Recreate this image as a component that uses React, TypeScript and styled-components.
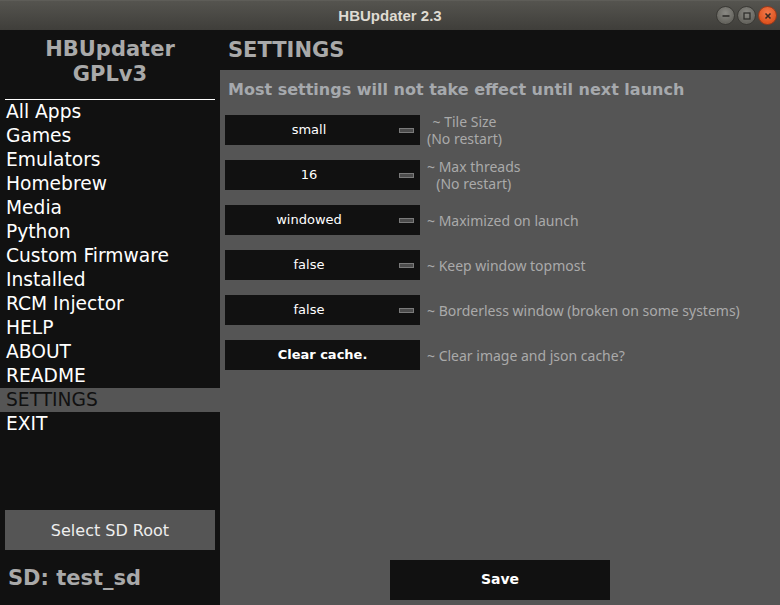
import React from "react";
import styled, { createGlobalStyle } from "styled-components";

const GlobalStyle = createGlobalStyle`
  html, body {
    margin: 0;
    padding: 0;
    background: #111111;
  }
  * {
    box-sizing: border-box;
  }
`;

const NAV_ITEMS = [
  "All Apps",
  "Games",
  "Emulators",
  "Homebrew",
  "Media",
  "Python",
  "Custom Firmware",
  "Installed",
  "RCM Injector",
  "HELP",
  "ABOUT",
  "README",
  "SETTINGS",
  "EXIT",
];

// labels keep their line breaks, like the Tk labels they come from
const SETTINGS: { value: string; label: string }[] = [
  { value: "small", label: "~ Tile Size\n(No restart)" },
  { value: "16", label: "~ Max threads\n(No restart)" },
  { value: "windowed", label: "~ Maximized on launch" },
  { value: "false", label: "~ Keep window topmost" },
  { value: "false", label: "~ Borderless window (broken on some systems)" },
];

export default function App() {
  return (
    <>
      <GlobalStyle />
      <Window>
        <TitleBar>
          <Title>{"HBUpdater 2.3"}</Title>
          <WindowButtons>
            <WinButton>
              <svg width="10" height="10" viewBox="0 0 10 10">
                <line x1="1.5" y1="5" x2="8.5" y2="5" stroke="#2f2e2b" strokeWidth="1.6" />
              </svg>
            </WinButton>
            <WinButton>
              <svg width="10" height="10" viewBox="0 0 10 10">
                <rect x="2" y="2" width="6" height="6" fill="none" stroke="#2f2e2b" strokeWidth="1.3" />
              </svg>
            </WinButton>
            <WinButton close>
              <svg width="10" height="10" viewBox="0 0 10 10">
                <path d="M2.5 2.5 L7.5 7.5 M7.5 2.5 L2.5 7.5" stroke="#3a2a22" strokeWidth="1.6" />
              </svg>
            </WinButton>
          </WindowButtons>
        </TitleBar>
        <Body>
          <Sidebar>
            <Brand>{"HBUpdater\nGPLv3"}</Brand>
            <Divider />
            <NavList>
              {NAV_ITEMS.map((item) => (
                <NavItem key={item} active={item === "SETTINGS"}>
                  {item}
                </NavItem>
              ))}
            </NavList>
            <SidebarFooter>
              <SelectRoot>{"Select SD Root"}</SelectRoot>
              <SdLabel>{"SD: test_sd"}</SdLabel>
            </SidebarFooter>
          </Sidebar>
          <Main>
            <PageHeader>{"SETTINGS"}</PageHeader>
            <Content>
              <Notice>{"Most settings will not take effect until next launch"}</Notice>
              <SettingsList>
                {SETTINGS.map((s, i) => (
                  <Row key={i}>
                    <Dropdown>
                      <DropdownValue>{s.value}</DropdownValue>
                      <Indicator />
                    </Dropdown>
                    <RowLabel>{s.label}</RowLabel>
                  </Row>
                ))}
                <Row>
                  <ActionButton>{"Clear cache."}</ActionButton>
                  <RowLabel>{"~ Clear image and json cache?"}</RowLabel>
                </Row>
              </SettingsList>
              <SaveButton>{"Save"}</SaveButton>
            </Content>
          </Main>
        </Body>
      </Window>
    </>
  );
}

const Window = styled.div`
  width: 780px;
  height: 605px;
  display: flex;
  flex-direction: column;
  overflow: hidden;
  font-family: "DejaVu Sans", sans-serif;
`;

const TitleBar = styled.div`
  height: 30px;
  flex-shrink: 0;
  position: relative;
  display: flex;
  align-items: center;
  justify-content: center;
  background: linear-gradient(#55544f, #3f3e3a);
  border-top: 1px solid #5e5d58;
`;

const Title = styled.div`
  font-family: "Liberation Sans", sans-serif;
  font-weight: 700;
  font-size: 15px;
  color: #dfdbd2;
`;

const WindowButtons = styled.div`
  position: absolute;
  right: 3px;
  top: 5px;
  display: flex;
  gap: 2px;
`;

const WinButton = styled.div<{ close?: boolean }>`
  width: 19px;
  height: 19px;
  border-radius: 50%;
  display: flex;
  align-items: center;
  justify-content: center;
  border: 1px solid ${(p) => (p.close ? "#9c3a1b" : "#3a3935")};
  background: ${(p) =>
    p.close
      ? "radial-gradient(circle at 50% 35%, #f27a4c, #df5420 70%)"
      : "radial-gradient(circle at 50% 35%, #8a8984, #66655f 70%)"};
`;

const Body = styled.div`
  flex: 1;
  display: flex;
  min-height: 0;
`;

const Sidebar = styled.div`
  width: 220px;
  flex-shrink: 0;
  background: #111111;
  display: flex;
  flex-direction: column;
`;

const Brand = styled.div`
  padding-top: 7px;
  font-size: 21px;
  font-weight: 700;
  line-height: 25px;
  white-space: pre-line;
  text-align: center;
  color: #a9a9a9;
`;

const Divider = styled.div`
  height: 1px;
  margin: 12px 5px 0;
  background: #ffffff;
`;

const NavList = styled.div`
  display: flex;
  flex-direction: column;
`;

const NavItem = styled.div<{ active?: boolean }>`
  height: 24px;
  line-height: 24px;
  padding-left: 6px;
  font-size: 18.67px;
  white-space: nowrap;
  color: ${(p) => (p.active ? "#111111" : "#ffffff")};
  background: ${(p) => (p.active ? "#555555" : "transparent")};
`;

const SidebarFooter = styled.div`
  margin-top: auto;
  padding: 0 5px 14px;
  display: flex;
  flex-direction: column;
`;

const SelectRoot = styled.div`
  height: 40px;
  display: flex;
  align-items: center;
  justify-content: center;
  background: #555555;
  color: #eeeeee;
  font-size: 16px;
`;

const SdLabel = styled.div`
  margin-top: 16px;
  padding-left: 3px;
  font-size: 21px;
  font-weight: 700;
  line-height: 25px;
  color: #a9a9a9;
`;

const Main = styled.div`
  flex: 1;
  display: flex;
  flex-direction: column;
  background: #555555;
`;

const PageHeader = styled.div`
  height: 40px;
  flex-shrink: 0;
  display: flex;
  align-items: center;
  padding-left: 8px;
  background: #111111;
  color: #a9a9a9;
  font-size: 21px;
  font-weight: 700;
`;

const Content = styled.div`
  flex: 1;
  display: flex;
  flex-direction: column;
  padding: 9px 0 5px 5px;
`;

const Notice = styled.div`
  padding-left: 3px;
  font-size: 16px;
  font-weight: 700;
  line-height: 22px;
  color: #a6a9ad;
`;

const SettingsList = styled.div`
  margin-top: 14px;
  display: flex;
  flex-direction: column;
  gap: 15px;
`;

const Row = styled.div`
  display: flex;
  align-items: center;
  gap: 7px;
  height: 30px;
`;

const Dropdown = styled.div`
  width: 195px;
  height: 30px;
  flex-shrink: 0;
  display: flex;
  align-items: center;
  padding-bottom: 2px;
  background: #111111;
`;

const DropdownValue = styled.span`
  flex: 1;
  text-align: center;
  color: #ffffff;
  font-size: 13px;
`;

const Indicator = styled.span`
  width: 15px;
  height: 5px;
  margin: 2px 6px 0;
  border: 1px solid #7a7a7a;
  background: #4c4c4c;
`;

const ActionButton = styled.div`
  width: 195px;
  height: 30px;
  flex-shrink: 0;
  display: flex;
  align-items: center;
  justify-content: center;
  padding-bottom: 2px;
  background: #111111;
  color: #ffffff;
  font-size: 13px;
  font-weight: 700;
`;

const RowLabel = styled.div`
  font-family: "Noto Sans", sans-serif;
  font-size: 14px;
  line-height: 17px;
  white-space: pre-line;
  text-align: center;
  color: #aaaaaa;
`;

const SaveButton = styled.div`
  margin: auto auto 0;
  width: 220px;
  height: 40px;
  display: flex;
  align-items: center;
  justify-content: center;
  padding-bottom: 2px;
  background: #111111;
  color: #ffffff;
  font-size: 14px;
  font-weight: 700;
  position: relative;
  left: -2.5px;
`;
